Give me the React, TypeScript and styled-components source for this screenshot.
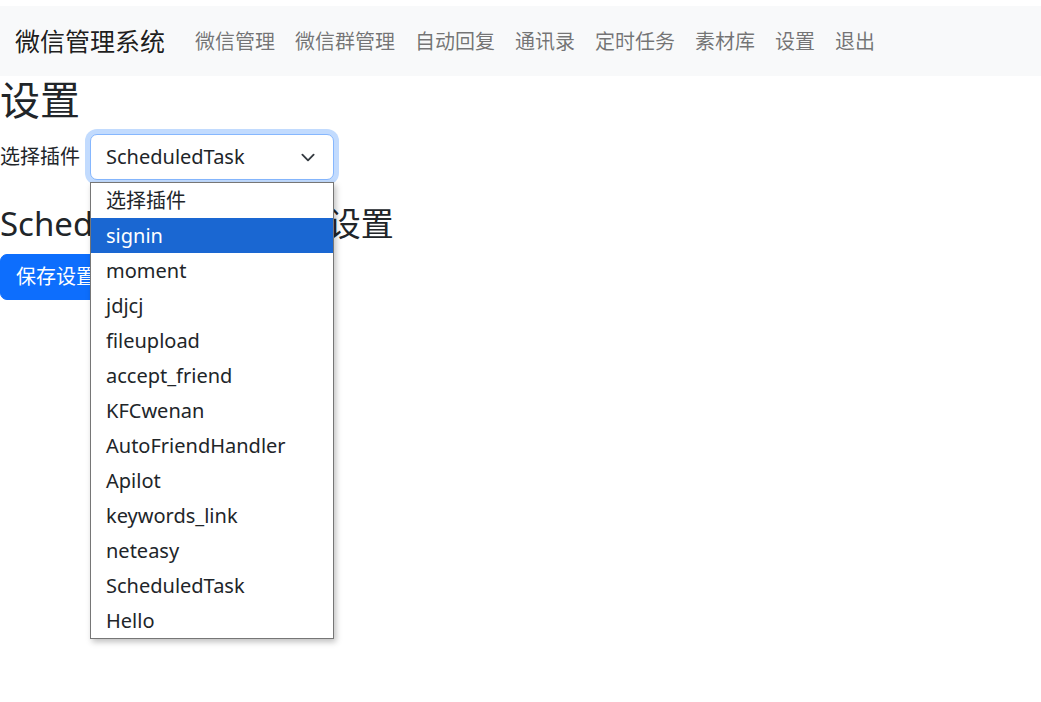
import { FC } from 'react';
import styled, { createGlobalStyle } from 'styled-components';

const GlobalStyle = createGlobalStyle`
  html, body {
    margin: 0;
    padding: 0;
    background: #fff;
  }

  body {
    font-family: 'Noto Sans', 'Noto Sans CJK SC', sans-serif;
    color: #212529;
  }

  * {
    box-sizing: border-box;
  }
`;

const Page = styled.div`
  min-height: 100vh;
  padding-top: 6px;
`;

const Navbar = styled.nav`
  display: flex;
  align-items: center;
  height: 70px;
  padding: 0 15px;
  background: #f8f9fa;
`;

const Brand = styled.a`
  margin-right: 20px;
  font-size: 25px;
  line-height: 37px;
  color: rgba(0, 0, 0, 0.9);
  text-decoration: none;
`;

const NavList = styled.ul`
  display: flex;
  margin: 0;
  padding: 0;
  list-style: none;
`;

const NavLink = styled.a`
  display: block;
  padding: 11px 10px 9px;
  font-size: 20px;
  line-height: 30px;
  color: rgba(0, 0, 0, 0.55);
  text-decoration: none;
`;

const Title = styled.h1`
  margin: 0 0 10px;
  font-size: 40px;
  font-weight: 400;
  line-height: 48px;
`;

const FieldRow = styled.div`
  display: flex;
  align-items: center;
  gap: 10px;
  margin-bottom: 24px;
`;

const Label = styled.label`
  font-size: 20px;
  line-height: 30px;
`;

const SelectWrap = styled.div`
  position: relative;
  width: 244px;
`;

const SelectBox = styled.div`
  display: flex;
  align-items: center;
  justify-content: space-between;
  height: 46px;
  padding: 0 15px;
  border: 1px solid #86b7fe;
  border-radius: 7px;
  background: #fff;
  box-shadow: 0 0 0 5px rgba(13, 110, 253, 0.25);
  font-size: 20px;
  line-height: 30px;
`;

const Chevron = styled.svg`
  width: 20px;
  height: 15px;
`;

const OptionList = styled.ul`
  position: absolute;
  top: 48px;
  left: 0;
  z-index: 10;
  width: 244px;
  margin: 0;
  padding: 0;
  list-style: none;
  background: #fff;
  border: 1px solid #767676;
  box-shadow: 2px 3px 6px rgba(0, 0, 0, 0.25);
`;

const Option = styled.li<{ $active?: boolean }>`
  height: 35px;
  padding: 0 15px;
  font-size: 20px;
  line-height: 35px;
  color: ${({ $active }) => ($active ? '#fff' : '#212529')};
  background: ${({ $active }) => ($active ? '#1a67d2' : 'transparent')};
  white-space: nowrap;
`;

const SubTitle = styled.h2`
  margin: 0 0 10px;
  font-size: 33px;
  font-weight: 400;
  line-height: 40px;
  white-space: nowrap;
`;

const PrimaryButton = styled.button`
  height: 46px;
  padding: 0 15px;
  border: 1px solid #0d6efd;
  border-radius: 7px;
  background: #0d6efd;
  color: #fff;
  font-family: inherit;
  font-size: 20px;
  line-height: 30px;
`;

const navItems = ['微信管理', '微信群管理', '自动回复', '通讯录', '定时任务', '素材库', '设置', '退出'];

const plugins = [
  '选择插件',
  'signin',
  'moment',
  'jdjcj',
  'fileupload',
  'accept_friend',
  'KFCwenan',
  'AutoFriendHandler',
  'Apilot',
  'keywords_link',
  'neteasy',
  'ScheduledTask',
  'Hello',
];

const App: FC = () => {
  return (
    <Page>
      <GlobalStyle />
      <Navbar>
        <Brand href='#'>微信管理系统</Brand>
        <NavList>
          {navItems.map((item) => (
            <li key={item}>
              <NavLink href='#'>{item}</NavLink>
            </li>
          ))}
        </NavList>
      </Navbar>
      <Title>设置</Title>
      <FieldRow>
        <Label>选择插件</Label>
        <SelectWrap>
          <SelectBox>
            ScheduledTask
            <Chevron viewBox='0 0 16 16'>
              <path d='m2 5 6 6 6-6' fill='none' stroke='#343a40' strokeWidth='2' strokeLinecap='round' strokeLinejoin='round' />
            </Chevron>
          </SelectBox>
          <OptionList>
            {plugins.map((name) => (
              <Option key={name} $active={name === 'signin'}>
                {name}
              </Option>
            ))}
          </OptionList>
        </SelectWrap>
      </FieldRow>
      <SubTitle>ScheduledTask的插件设置</SubTitle>
      <PrimaryButton>保存设置</PrimaryButton>
    </Page>
  );
};

export default App;
